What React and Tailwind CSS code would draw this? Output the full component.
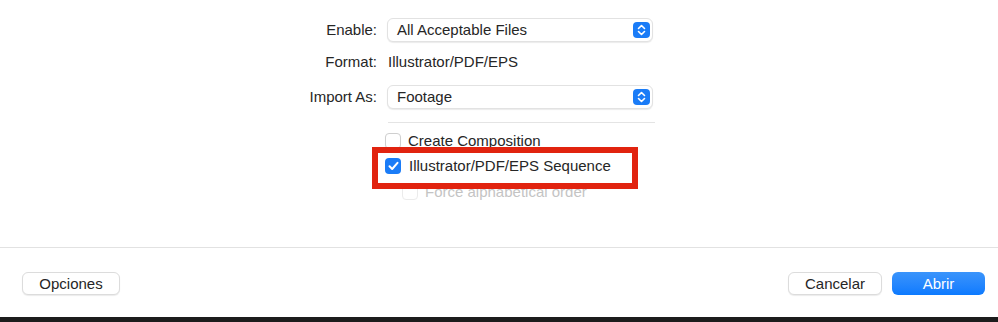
import React from "react";

function Stepper() {
    return (
        <span className="w-[17px] h-[16px] rounded-[4px] bg-[#1a7cf7] flex items-center justify-center">
            <svg width="9" height="12" viewBox="0 0 9 12" fill="none" stroke="white" strokeWidth="1.6" strokeLinecap="round" strokeLinejoin="round">
                <path d="M1.5 4.5 L4.5 1.5 L7.5 4.5" />
                <path d="M1.5 7.5 L4.5 10.5 L7.5 7.5" />
            </svg>
        </span>
    );
}

function Select({ value }) {
    return (
        <div className="w-[266px] h-[24px] rounded-[6px] bg-white border border-[#e2e2e2] shadow-[0_1px_1px_rgba(0,0,0,0.08)] flex items-center justify-between pl-[9px] pr-[2px]">
            <span>{value}</span>
            <Stepper />
        </div>
    );
}

function Checkbox({ checked, disabled }) {
    if (checked) {
        return (
            <span className="w-[16px] h-[16px] rounded-[4px] bg-[#1a7cf7] flex items-center justify-center">
                <svg width="11" height="10" viewBox="0 0 11 10" fill="none" stroke="white" strokeWidth="2" strokeLinecap="round" strokeLinejoin="round">
                    <path d="M1.5 5.2 L4.2 8 L9.5 1.8" />
                </svg>
            </span>
        );
    }
    return (
        <span
            className={`w-[16px] h-[16px] rounded-[4px] bg-white border ${disabled ? "border-[#ebebeb]" : "border-[#cfcfcf] shadow-[0_1px_1px_rgba(0,0,0,0.06)]"}`}
        />
    );
}

export default function App() {
    return (
        <div
            className="relative w-[998px] h-[322px] bg-white flex flex-col text-[15px] text-[#262626] overflow-hidden"
            style={{ fontFamily: '"Liberation Sans", Arial, sans-serif' }}
        >
            {/* Form */}
            <div className="pt-[18px] flex flex-col">
                <div className="flex items-center h-[24px]">
                    <span className="w-[377px] text-right">Enable:</span>
                    <div className="ml-[10px]">
                        <Select value="All Acceptable Files" />
                    </div>
                </div>
                <div className="flex items-center h-[24px] mt-[8px]">
                    <span className="w-[377px] text-right">Format:</span>
                    <span className="ml-[11px]">Illustrator/PDF/EPS</span>
                </div>
                <div className="flex items-center h-[24px] mt-[11px]">
                    <span className="w-[377px] text-right">Import As:</span>
                    <div className="ml-[10px]">
                        <Select value="Footage" />
                    </div>
                </div>
                <div className="ml-[388px] w-[267px] h-px bg-[#e4e4e4] mt-[13px]" />

                <div className="ml-[385px] flex items-center gap-[7px] h-[20px] mt-[8px]">
                    <Checkbox />
                    <span>Create Composition</span>
                </div>
                <div className="ml-[385px] flex items-center gap-[8px] h-[20px] mt-[5px]">
                    <Checkbox checked />
                    <span>Illustrator/PDF/EPS Sequence</span>
                </div>
                <div className="ml-[402px] flex items-center gap-[7px] h-[20px] mt-[6px] text-[#c4c4c4]">
                    <Checkbox disabled />
                    <span>Force alphabetical order</span>
                </div>
            </div>

            {/* Highlight */}
            <div className="absolute left-[372px] top-[147px] w-[266px] h-[42px] border-[6px] border-[#e1230f]" />

            {/* Footer */}
            <div className="mt-auto border-t border-[#e2e2e2]">
                <div className="flex items-center justify-between pt-[24px] pb-[22px] pl-[22px] pr-[13px]">
                    <button className="w-[98px] h-[23px] rounded-[6px] bg-white border border-[#dcdcdc] shadow-[0_1px_1px_rgba(0,0,0,0.08)] leading-none">
                        Opciones
                    </button>
                    <div className="flex gap-[10px]">
                        <button className="w-[94px] h-[23px] rounded-[6px] bg-white border border-[#dcdcdc] shadow-[0_1px_1px_rgba(0,0,0,0.08)] leading-none">
                            Cancelar
                        </button>
                        <button className="w-[93px] h-[23px] rounded-[6px] bg-gradient-to-b from-[#3a94fb] to-[#0b7aff] text-white leading-none">
                            Abrir
                        </button>
                    </div>
                </div>
                <div className="h-[5px] bg-[#1c1c1c]" />
            </div>
        </div>
    );
}
